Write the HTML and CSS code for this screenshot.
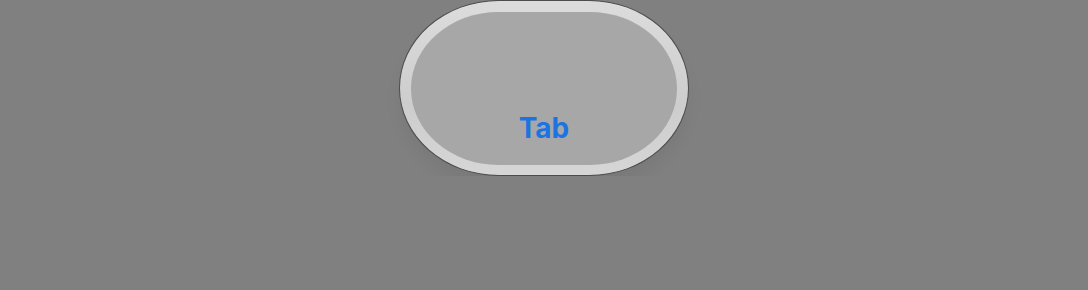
FILE: index.html
```html
<!DOCTYPE html>
<html lang="en">
<head>
  <meta charset="UTF-8">
  <title>Tab</title>
  <link rel="stylesheet" href="styles.css">
</head>
<body>
  <div class="stage">
    <div class="key">
      <div class="key-face">
        <span class="key-label">Tab</span>
      </div>
    </div>
  </div>
</body>
</html>
```

FILE: styles.css
```css
body {
  margin: 0;
  background-color: #808080;
  font-family: Inter, Roboto, "Liberation Sans", sans-serif;
}

.stage {
  display: flex;
  justify-content: center;
}

.key {
  width: 290px;
  height: 176px;
  padding: 11px 11px 10px;
  box-sizing: border-box;
  border: 1px solid #4c4c4c;
  border-radius: 100px / 88px;
  background: linear-gradient(#dcdcdc, #cdcdcd 60%, #d6d6d6);
  box-shadow: 0 12px 16px rgba(0, 0, 0, 0.05);
  display: flex;
}

.key-face {
  flex: 1;
  border-radius: 88px / 77px;
  background-color: #a7a7a7;
  display: flex;
  flex-direction: column;
  justify-content: flex-end;
  align-items: center;
  padding-bottom: 23px;
}

.key-label {
  font-size: 28px;
  font-weight: 650;
  color: #1c73e2;
  line-height: 1;
}
```
